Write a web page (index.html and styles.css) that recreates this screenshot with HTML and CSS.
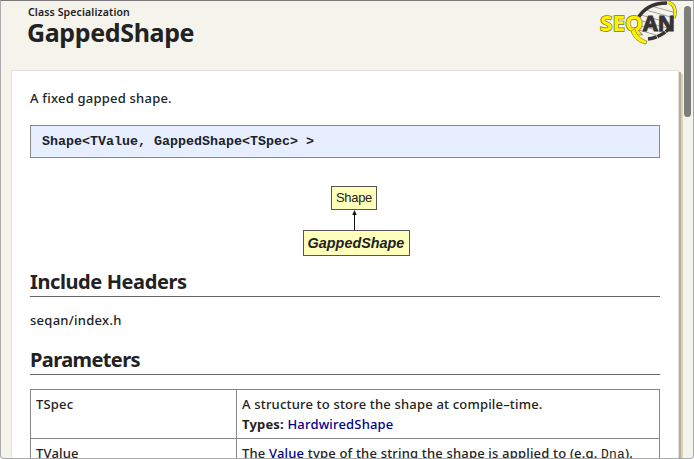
FILE: index.html
```html
<!DOCTYPE html>
<html lang="en">
<head>
<meta charset="utf-8">
<title>GappedShape</title>
<link rel="stylesheet" href="styles.css">
</head>
<body>
<div class="window">
  <header class="header">
    <div class="titles">
      <div class="kind">Class Specialization</div>
      <h1>GappedShape</h1>
    </div>
    <svg class="logo" width="80" height="48" viewBox="0 0 80 48">
      <path d="M66 2C74 2 78 8 75 18" fill="none" stroke="#77752c" stroke-width="3.6"/>
      <path d="M66 2C74 2 78 8 75 18" fill="none" stroke="#fff200" stroke-width="2.4"/>
      <path d="M38 31C36 15 50 3 66 2C76 6 75 28 56 39C48 41 42 39 38 31Z" fill="#f4f3ec"/>
      <path d="M52 6L74 12M47 10L75 18M42 15L74 24M40 20L71 29M39 25L67 33M40 30L60 36" stroke="#a0a09b" stroke-width="1" fill="none"/>
      <path d="M38 20C43 10 53 3 68 3" stroke="#373234" stroke-width="3.4" fill="none"/>
      <path d="M49 39C58 38 68 33 73 25" stroke="#373234" stroke-width="3.4" stroke-dasharray="9 .7" fill="none"/>
      <text class="logo-yellow" x="1" y="31" textLength="43" lengthAdjust="spacingAndGlyphs">SEQ</text>
      <text class="logo-dark" x="44" y="31" textLength="32" lengthAdjust="spacingAndGlyphs">AN</text>
      <path d="M36 29C38 36 42 39 48 41L47 44C40 43 34 38 32 31Z" fill="#fff200" stroke="#77752c" stroke-width=".6"/>
    </svg>
  </header>
  <div class="scrollbar"></div>
  <main class="page">
    <p class="summary">A fixed gapped shape.</p>
    <pre class="signature">Shape&lt;TValue, GappedShape&lt;TSpec&gt; &gt;</pre>
    <div class="diagram">
      <div class="node base">Shape</div>
      <svg class="arrow" width="7" height="20" viewBox="0 0 7 20"><path d="M3.5 3V20" stroke="#111"/><path d="M3.5 0L5.7 5H1.3Z" fill="#111"/></svg>
      <div class="node current">GappedShape</div>
    </div>
    <h2 class="h-include">Include Headers</h2>
    <p class="include">seqan/index.h</p>
    <h2 class="h-params">Parameters</h2>
    <table>
      <tr><td class="name">TSpec</td><td>A structure to store the shape at compile–time.<br><b>Types:</b> <a>HardwiredShape</a></td></tr>
      <tr><td class="name">TValue</td><td>The <a>Value</a> type of the string the shape is applied to (e.g. <code>Dna</code>).</td></tr>
    </table>
  </main>
</div>
</body>
</html>
```
FILE: styles.css
```css
* { box-sizing: border-box; }
body { margin: 0; font-family: "Noto Sans", sans-serif; font-size: 13px; font-weight: 500; color: #222; }
.window {
  position: relative;
  width: 694px; height: 459px; overflow: hidden;
  background: #f4f3ec;
  border: 1px solid #aaa; border-top-color: #7d777a;
  border-radius: 0 0 4px 4px;
}
.header { display: flex; justify-content: space-between; height: 69px; padding: 0 14px 0 26px; }
.kind { margin: 3px 0 0 1px; font-size: 10.5px; line-height: 16px; font-weight: 600; letter-spacing: .13px; }
h1 { margin: 0; font-size: 25px; line-height: 25px; font-weight: 700; letter-spacing: -.36px; }
.logo { display: block; margin-top: -1px; }
.logo-yellow, .logo-dark { font: bold 21px "Open Sans", sans-serif; }
.logo-yellow { fill: #fff200; stroke: #77752c; stroke-width: 1.4px; paint-order: stroke; }
.logo-dark { fill: #373234; stroke: #373234; stroke-width: 1px; }
.scrollbar { position: absolute; right: 2px; top: 5px; width: 7px; height: 111px; border-radius: 4px; background: #7e7e79; }
.page {
  width: 668px; height: 600px; margin-left: 10px; padding: 0 18px;
  background: #fff; border: 1px solid #e2e1d9;
  box-shadow: 2px 2px 0 #b5ad91, 4px 4px 0 #d8d3bf;
}
p { margin: 0; line-height: 20px; }
.summary { padding-top: 17px; letter-spacing: .22px; }
.signature {
  margin: 17px 0 0; height: 33px; padding: 0 11px; line-height: 31px;
  background: #e6eeff; border: 1px solid #888;
  font-family: "Liberation Mono", monospace; font-size: 13.33px; font-weight: 700;
}
.diagram { display: flex; flex-direction: column; align-items: center; width: 630px; margin: 28px 0 0 11px; font-family: "Liberation Sans", sans-serif; font-weight: 400; }
.node { border: 1px solid #555; background: #ffb; text-align: center; }
.base { width: 46px; height: 24px; margin-right: 4px; line-height: 22px; font-size: 13px; letter-spacing: -.3px; }
.current { width: 107px; height: 26px; line-height: 24px; font-size: 14.4px; font-weight: 700; font-style: italic; }
.arrow { display: block; margin-right: 3px; }
h2 { margin: 0; height: 27px; line-height: 24px; font-size: 20px; font-weight: 700; letter-spacing: -.4px; border-bottom: 1px solid #666; }
.h-include { margin-top: 14px; }
.include { height: 34px; padding-top: 13px; letter-spacing: .27px; }
.h-params { margin-top: 17px; letter-spacing: -.6px; }
table { width: 630px; margin-top: 14px; border-collapse: collapse; table-layout: fixed; }
td { padding: 4px 5px; border: 1px solid #888; vertical-align: top; line-height: 20px; letter-spacing: .18px; }
.name { width: 206px; }
a { color: #00008b; }
code { font-family: "Liberation Mono", monospace; font-size: 13px; }
```
